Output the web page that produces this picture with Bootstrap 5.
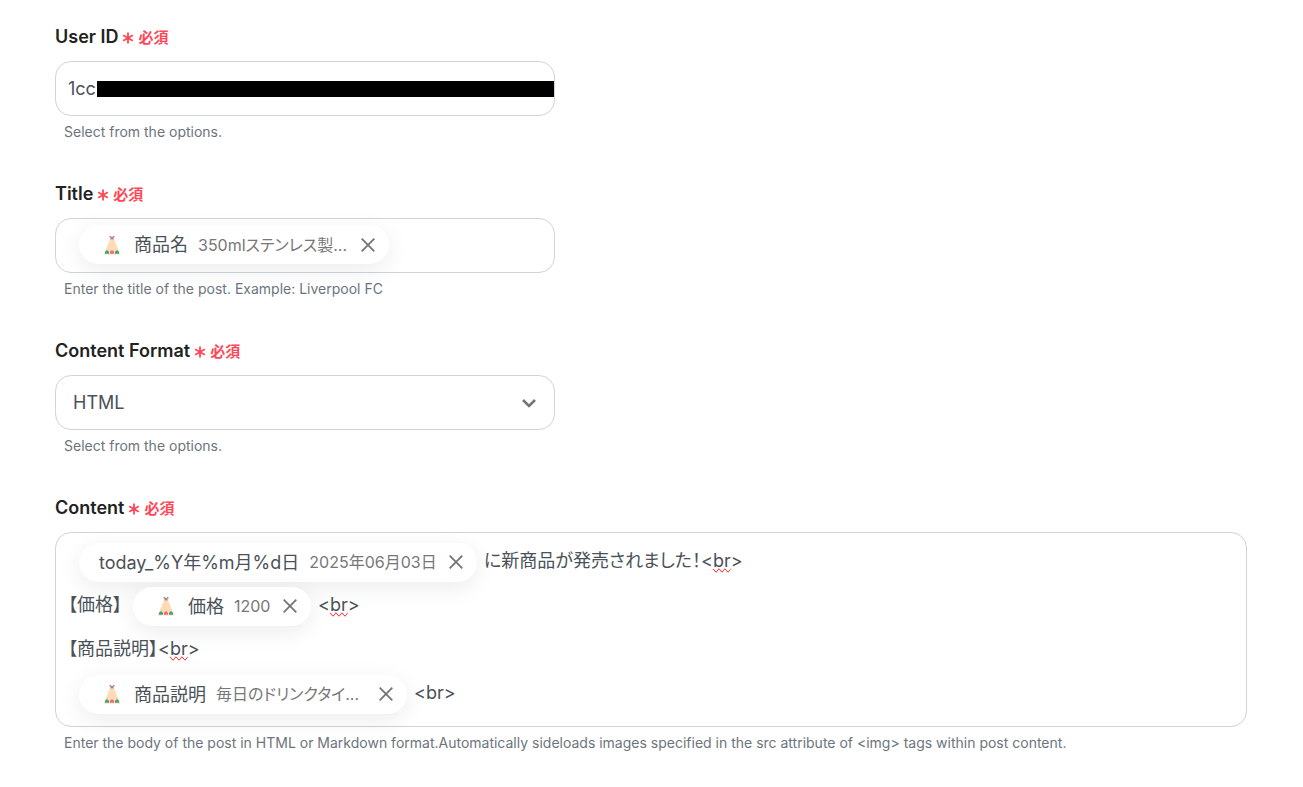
<!DOCTYPE html>
<html lang="ja">
<head>
<meta charset="utf-8">
<meta name="viewport" content="width=device-width, initial-scale=1">
<title>Create post</title>
<link href="https://cdn.jsdelivr.net/npm/bootstrap@5.3.0/dist/css/bootstrap.min.css" rel="stylesheet">
<style>
body{font-family:Inter,"Noto Sans CJK JP",sans-serif;font-size:18px;font-feature-settings:"palt";color:#4b5158;background:#fff}
.post-form{padding:25px 56px 24px 55px}
.field-block{margin-bottom:40px}
.field-name{gap:4px;font-size:18px;line-height:24px;height:24px;font-weight:600;color:#222;margin-bottom:12px}
.need{gap:4px;font-size:15px;color:#ff4757;padding-top:2px}
.half{max-width:500px}
.box{border:1px solid #ced4da;border-radius:16px;color:#4b5158;background-color:#fff;font-size:18px;min-height:55px;width:100%}
.hint{font-size:14px;line-height:20px;color:#6c757d;margin-top:6px;padding-left:9px}
.id-box{padding-left:12px}
.id-box input{border:0;padding:0;width:29px;color:inherit;background:none;outline:0}
.redacted{height:16px;background:#000}
.pick{appearance:none;padding:0 48px 0 17px;background-image:url("data:image/svg+xml,%3Csvg xmlns='http://www.w3.org/2000/svg' viewBox='0 0 14 10' fill='none' stroke='%23757575' stroke-width='2.6'%3E%3Cpath d='M1 2l6 6 6-6'/%3E%3C/svg%3E");background-repeat:no-repeat;background-position:right 18px center;background-size:14px 10px}
.rich{padding:6px 12px 8px;outline:0}
.rich-tall{padding:5px 12px 12px}
.text-row{height:44px}
.single .text-row{height:39px}
.pill{height:39px;margin:0 7px 0 11px;padding:0 14px 0 20px;border-radius:20px;background:#fff;box-shadow:0 6px 24px rgba(0,0,0,.08)}
.rich-tall .pill{margin-top:4px}
.pill .sample{font-size:16px;color:#777;margin-left:10px}
.pill .tent{width:26px;height:20px;margin-right:9px}
.pill button{width:14px;height:14px}
.typo{text-decoration:underline wavy #f00 1px;text-decoration:spelling-error}
.w-title{width:310px}.w-today{width:398px}.w-price{width:178px}.w-desc{width:328px}
</style>
<script src="https://cdn.jsdelivr.net/npm/bootstrap@5.3.0/dist/js/bootstrap.bundle.min.js"></script>
</head>
<body>
<svg class="d-none">
<symbol id="star" viewBox="0 0 12 12"><path d="M6 .5v11M1.2 3.2l9.6 5.6M10.8 3.2L1.2 8.8" stroke="#ff4757" stroke-width="1.8"/></symbol>
<symbol id="close" viewBox="0 0 14 14"><path d="M.7.7l12.6 12.6M13.3.7L.7 13.3" stroke="#757575" stroke-width="1.8"/></symbol>
<symbol id="tent" viewBox="0 0 26 20"><path d="M11.500 3.500h3L21.500 19.500h-17z" fill="#ffdbb5"/><path d="M10.200.8l2.800 1 2.800-1-1 4h-3.600z" fill="#d8b5ae"/><path d="M10.800 1l3 3M15.200 1l-3 3" stroke="#8d6265" stroke-width=".7"/><path d="M6 18.800v-2l2-1.800 2 1.800v2z" fill="#35a985"/><path d="M11 18.800v-2l2-1.800 2 1.800v2z" fill="#f4687e"/><path d="M16 18.800v-2l2-1.800 2 1.800v2z" fill="#35a985"/></symbol>
</svg>
<form class="post-form container-fluid">
<div class="field-block half">
<label class="field-name d-flex align-items-center" for="uid">User ID <span class="need d-flex align-items-center"><svg width="12" height="12"><use href="#star"/></svg>必須</span></label>
<div class="box id-box d-flex align-items-center overflow-hidden"><input id="uid" type="text" value="1cc"><span class="redacted flex-fill"></span></div>
<div class="hint">Select from the options.</div>
</div>
<div class="field-block half">
<label class="field-name d-flex align-items-center" id="l-title">Title <span class="need d-flex align-items-center"><svg width="12" height="12"><use href="#star"/></svg>必須</span></label>
<div class="box rich single" role="textbox" aria-labelledby="l-title" contenteditable="true" spellcheck="false"><div class="text-row d-flex align-items-center text-nowrap"><span class="pill w-title d-inline-flex align-items-center" contenteditable="false"><svg class="tent"><use href="#tent"/></svg><span>商品名</span><span class="sample">350mlステンレス製...</span><button class="border-0 bg-transparent p-0 d-flex flex-shrink-0 ms-auto" type="button" aria-label="Remove"><svg width="14" height="14"><use href="#close"/></svg></button></span></div></div>
<div class="hint">Enter the title of the post. Example: Liverpool FC</div>
</div>
<div class="field-block half">
<label class="field-name d-flex align-items-center" for="fmt">Content Format <span class="need d-flex align-items-center"><svg width="12" height="12"><use href="#star"/></svg>必須</span></label>
<select class="box pick" id="fmt"><option>HTML</option><option>Markdown</option></select>
<div class="hint">Select from the options.</div>
</div>
<div>
<label class="field-name d-flex align-items-center" id="l-body">Content <span class="need d-flex align-items-center"><svg width="12" height="12"><use href="#star"/></svg>必須</span></label>
<div class="box rich rich-tall" role="textbox" aria-multiline="true" aria-labelledby="l-body" contenteditable="true" spellcheck="false">
<div class="text-row d-flex align-items-center text-nowrap"><span class="pill w-today d-inline-flex align-items-center" contenteditable="false"><span>today_%Y年%m月%d日</span><span class="sample">2025年06月03日</span><button class="border-0 bg-transparent p-0 d-flex flex-shrink-0 ms-auto" type="button" aria-label="Remove"><svg width="14" height="14"><use href="#close"/></svg></button></span><span>に新商品が発売されました！&lt;<span class="typo">br</span>&gt;</span></div>
<div class="text-row d-flex align-items-center text-nowrap"><span>【価格】</span><span class="pill w-price d-inline-flex align-items-center" contenteditable="false"><svg class="tent"><use href="#tent"/></svg><span>価格</span><span class="sample">1200</span><button class="border-0 bg-transparent p-0 d-flex flex-shrink-0 ms-auto" type="button" aria-label="Remove"><svg width="14" height="14"><use href="#close"/></svg></button></span><span>&lt;<span class="typo">br</span>&gt;</span></div>
<div class="text-row d-flex align-items-center text-nowrap"><span>【商品説明】&lt;<span class="typo">br</span>&gt;</span></div>
<div class="text-row d-flex align-items-center text-nowrap"><span class="pill w-desc d-inline-flex align-items-center" contenteditable="false"><svg class="tent"><use href="#tent"/></svg><span>商品説明</span><span class="sample">毎日のドリンクタイ...</span><button class="border-0 bg-transparent p-0 d-flex flex-shrink-0 ms-auto" type="button" aria-label="Remove"><svg width="14" height="14"><use href="#close"/></svg></button></span><span>&lt;br&gt;</span></div>
</div>
<div class="hint">Enter the body of the post in HTML or Markdown format.Automatically sideloads images specified in the src attribute of &lt;img&gt; tags within post content.</div>
</div>
</form>
</body>
</html>
